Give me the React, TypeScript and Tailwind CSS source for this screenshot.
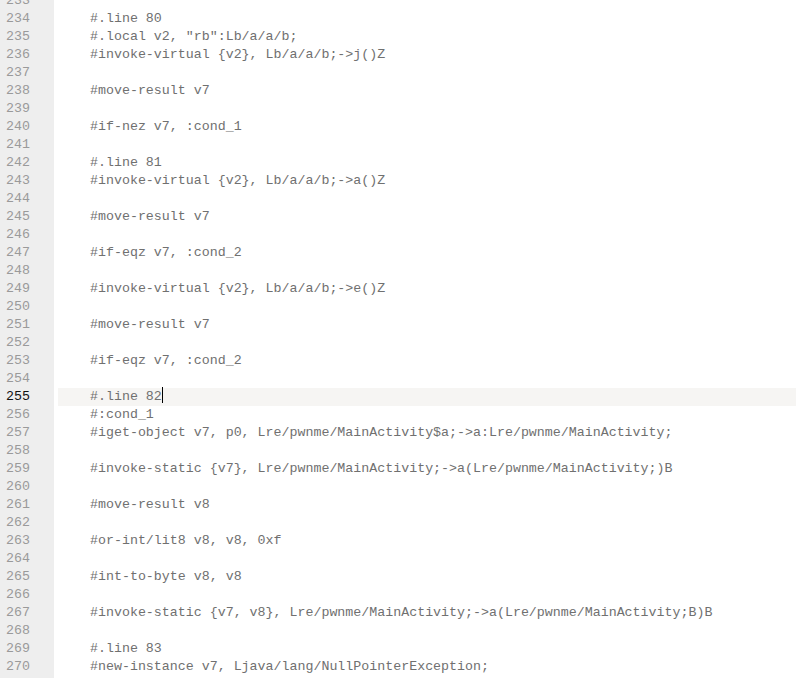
const lines: [number, string][] = [
  [233, ""],
  [234, "#.line 80"],
  [235, '#.local v2, "rb":Lb/a/a/b;'],
  [236, "#invoke-virtual {v2}, Lb/a/a/b;->j()Z"],
  [237, ""],
  [238, "#move-result v7"],
  [239, ""],
  [240, "#if-nez v7, :cond_1"],
  [241, ""],
  [242, "#.line 81"],
  [243, "#invoke-virtual {v2}, Lb/a/a/b;->a()Z"],
  [244, ""],
  [245, "#move-result v7"],
  [246, ""],
  [247, "#if-eqz v7, :cond_2"],
  [248, ""],
  [249, "#invoke-virtual {v2}, Lb/a/a/b;->e()Z"],
  [250, ""],
  [251, "#move-result v7"],
  [252, ""],
  [253, "#if-eqz v7, :cond_2"],
  [254, ""],
  [255, "#.line 82"],
  [256, "#:cond_1"],
  [257, "#iget-object v7, p0, Lre/pwnme/MainActivity$a;->a:Lre/pwnme/MainActivity;"],
  [258, ""],
  [259, "#invoke-static {v7}, Lre/pwnme/MainActivity;->a(Lre/pwnme/MainActivity;)B"],
  [260, ""],
  [261, "#move-result v8"],
  [262, ""],
  [263, "#or-int/lit8 v8, v8, 0xf"],
  [264, ""],
  [265, "#int-to-byte v8, v8"],
  [266, ""],
  [267, "#invoke-static {v7, v8}, Lre/pwnme/MainActivity;->a(Lre/pwnme/MainActivity;B)B"],
  [268, ""],
  [269, "#.line 83"],
  [270, "#new-instance v7, Ljava/lang/NullPointerException;"],
];

const ACTIVE = 255;

export default function App() {
  return (
    <div
      className="w-[798px] h-[678px] overflow-hidden bg-white flex text-[13.3px] leading-[18px]"
      style={{ fontFamily: '"Liberation Mono", "DejaVu Sans Mono", monospace' }}
    >
      <div className="w-[54px] shrink-0 bg-[#eeeeee] h-full">
        <div className="-mt-[8px]">
          {lines.map(([n]) => (
            <div
              key={n}
              className={`h-[18px] pl-[6px] ${n === ACTIVE ? "text-[#111111]" : "text-[#9a9a9a]"}`}
            >
              {n}
            </div>
          ))}
        </div>
      </div>
      <div className="flex-1 pl-[4px] pr-[2px]">
        <div className="-mt-[8px]">
          {lines.map(([n, text]) => (
            <div
              key={n}
              className={`h-[18px] pl-[32px] whitespace-pre text-[#707070] ${n === ACTIVE ? "bg-[#f6f5f3]" : ""}`}
            >
              {text}
              {n === ACTIVE && (
                <span className="inline-block w-px h-[16px] bg-black align-middle -mt-[2px]" />
              )}
            </div>
          ))}
        </div>
      </div>
    </div>
  );
}
